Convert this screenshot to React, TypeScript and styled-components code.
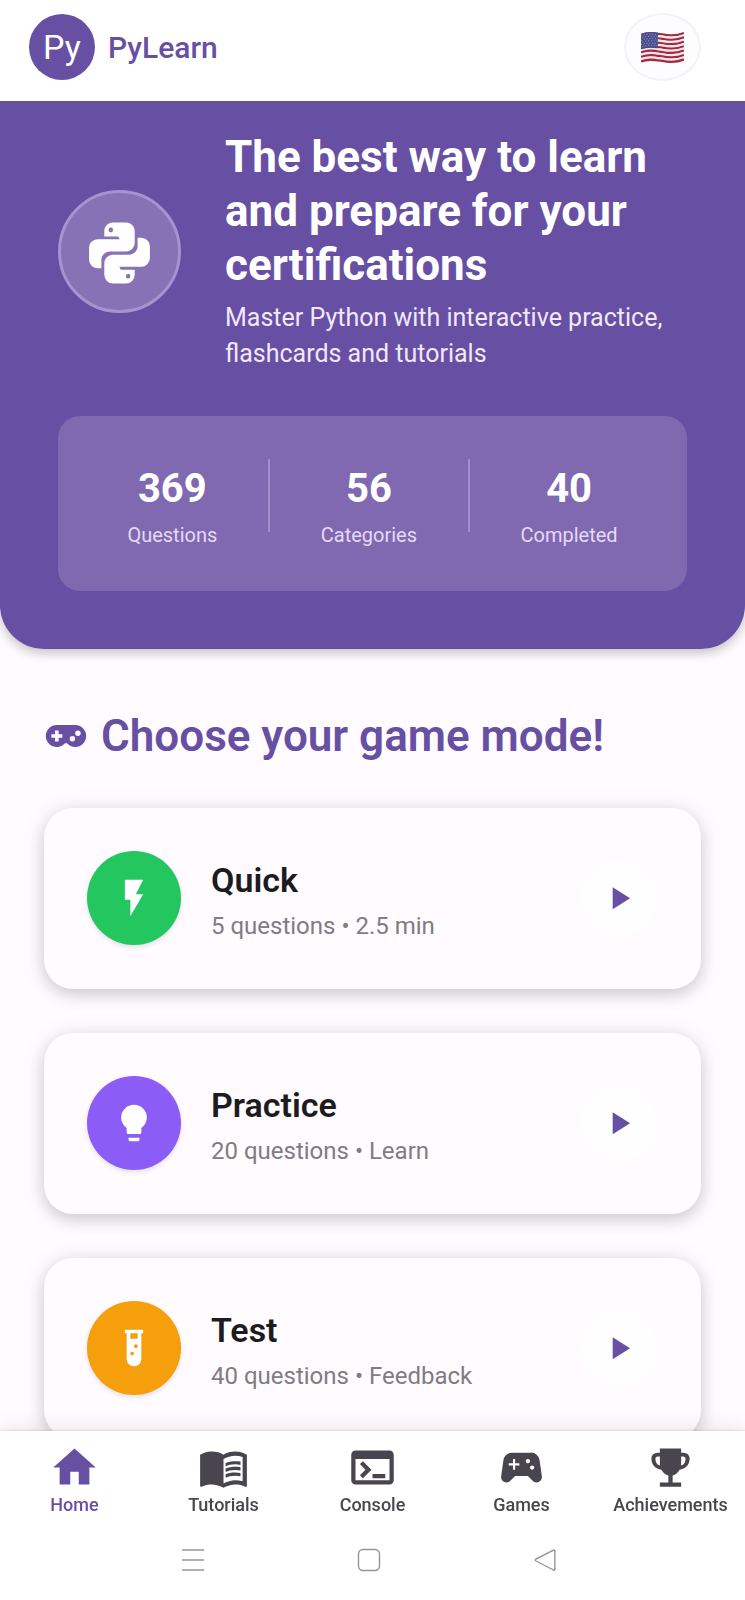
import React from "react";
import styled, { createGlobalStyle } from "styled-components";
import { MdSportsEsports, MdTerminal } from "react-icons/md";

const color = {
  primary: "#674fa3",
  surface: "#fffbff",
  text: "#1c1b1f",
  muted: "#7f7c82",
  nav: "#49454f",
};

const GlobalStyle = createGlobalStyle`
  *, *::before, *::after { box-sizing: border-box; }
  body {
    margin: 0;
    background: #fff;
    color: ${color.text};
    font-family: Roboto, "Liberation Sans", sans-serif;
  }
  h1, h2, h3, p, dl, dt, dd, ul { margin: 0; padding: 0; }
  ul { list-style: none; }
  button { font: inherit; border: 0; padding: 0; cursor: pointer; }
`;

const Screen = styled.div`
  display: flex;
  flex-direction: column;
  height: 100vh;
  overflow: hidden;
`;

const TopBar = styled.header`
  display: flex;
  flex: none;
  align-items: center;
  justify-content: space-between;
  padding: 13px 44px 20px 29px;
  background: #fff;
`;

const Brand = styled.a`
  display: flex;
  align-items: center;
  gap: 13px;
  color: ${color.primary};
  font-size: 30px;
  font-weight: 500;
  text-decoration: none;
`;

const BrandMark = styled.span`
  display: grid;
  place-items: center;
  width: 66px;
  height: 66px;
  border-radius: 50%;
  background: ${color.primary};
  color: #fff;
  font-size: 34px;
  font-weight: 400;
`;

const LanguageButton = styled.button`
  display: grid;
  place-items: center;
  width: 77px;
  height: 68px;
  border: 2px solid #f3f2f7;
  border-radius: 50%;
  background: #fdfdff;
`;

const Content = styled.main`
  flex: 1;
  min-height: 0;
  overflow-y: auto;
  scrollbar-width: none;
  background: ${color.surface};
`;

const Hero = styled.section`
  padding: 29px 58px 58px;
  border-radius: 0 0 44px 44px;
  background: ${color.primary};
  color: #fff;
  box-shadow: 0 4px 12px rgba(0, 0, 0, 0.24);
`;

const HeroIntro = styled.div`
  display: flex;
  align-items: center;
  gap: 44px;
  margin-bottom: 44px;
`;

const HeroBadge = styled.div`
  display: grid;
  flex: none;
  place-items: center;
  width: 123px;
  height: 123px;
  border: 3px solid #a793cf;
  border-radius: 50%;
  background: #8672b5;
`;

const HeroTitle = styled.h1`
  margin-bottom: 8px;
  font-size: 44px;
  font-weight: 700;
  line-height: 54px;
`;

const HeroText = styled.p`
  color: #f1e9fb;
  font-size: 25px;
  line-height: 36px;
`;

const Stats = styled.dl`
  display: flex;
  justify-content: space-around;
  padding: 43px 44px 44px;
  border-radius: 22px;
  background: #8069b1;
`;

const Stat = styled.div`
  display: flex;
  flex-direction: column-reverse;
  gap: 4px;
  text-align: center;
`;

const StatValue = styled.dd`
  font-size: 40px;
  font-weight: 700;
  line-height: 60px;
`;

const StatLabel = styled.dt`
  color: #e4daf4;
  font-size: 20px;
  line-height: 24px;
`;

const StatDivider = styled.div`
  width: 2px;
  height: 73px;
  background: #a18fc9;
`;

const Modes = styled.section`
  padding: 58px 44px 44px;
`;

const ModesTitle = styled.h2`
  display: flex;
  align-items: center;
  gap: 13px;
  margin-bottom: 43px;
  color: ${color.primary};
  font-size: 44px;
  font-weight: 600;
  line-height: 58px;
`;

const ModeList = styled.ul`
  display: flex;
  flex-direction: column;
  gap: 44px;
`;

const ModeCard = styled.li`
  display: flex;
  align-items: center;
  gap: 30px;
  padding: 43px 44px 44px 43px;
  border-radius: 29px;
  background: ${color.surface};
  box-shadow: 0 6px 16px rgba(0, 0, 0, 0.13), 0 2px 24px rgba(0, 0, 0, 0.1);
`;

const ModeIcon = styled.div<{ $color: string }>`
  display: grid;
  flex: none;
  place-items: center;
  width: 94px;
  height: 94px;
  border-radius: 50%;
  background: ${(p) => p.$color};
  color: #fff;
  box-shadow: 0 2px 5px rgba(0, 0, 0, 0.12);
`;

const ModeBody = styled.div`
  flex: 1;
  min-width: 0;
`;

const ModeName = styled.h3`
  margin-bottom: 6px;
  font-size: 34px;
  font-weight: 600;
  line-height: 50px;
`;

const ModeDetail = styled.p`
  color: ${color.muted};
  font-size: 24px;
  line-height: 30px;
`;

const PlayButton = styled.button`
  display: grid;
  flex: none;
  place-items: center;
  width: 76px;
  height: 76px;
  border-radius: 50%;
  background: #fffeff;
  color: ${color.primary};
`;

const TabBar = styled.nav`
  position: relative;
  display: grid;
  flex: none;
  grid-template-columns: repeat(5, minmax(0, 1fr));
  padding: 11px 0 3px;
  background: #fff;
  box-shadow: 0 -1px 2px rgba(0, 0, 0, 0.1), 0 -4px 20px rgba(0, 0, 0, 0.08);
`;

const Tab = styled.a<{ $active?: boolean }>`
  display: flex;
  flex-direction: column;
  align-items: center;
  color: ${(p) => (p.$active ? color.primary : color.nav)};
  font-size: 18px;
  font-weight: 500;
  line-height: 24px;
  text-decoration: none;
`;

const SystemBar = styled.footer`
  position: relative;
  display: flex;
  flex: none;
  height: 80px;
  padding: 0 112px 0 105px;
  background: #fff;
`;

const SystemButton = styled.button`
  display: grid;
  flex: 1;
  place-items: center;
  background: none;
`;

const Icon = ({ d, size }: { d: string; size: number }) => (
  <svg width={size} height={size} viewBox="0 0 24 24" fill="currentColor" fillRule="evenodd" aria-hidden="true">
    <path d={d} />
  </svg>
);

const paths = {
  python:
    "M19.14,7.5A2.86,2.86 0 0,1 22,10.36V14.14A2.86,2.86 0 0,1 19.14,17H12C12,17.39 12.32,17.96 12.71,17.96H17V19.64A2.86,2.86 0 0,1 14.14,22.5H9.86A2.86,2.86 0 0,1 7,19.64V15.89C7,14.31 8.28,13.04 9.86,13.04H15.11C16.69,13.04 17.96,11.76 17.96,10.18V7.5H19.14M14.86,19.29C14.46,19.29 14.14,19.59 14.14,20.18C14.14,20.77 14.46,20.89 14.86,20.89A0.71,0.71 0 0,0 15.57,20.18C15.57,19.59 15.25,19.29 14.86,19.29M4.86,17.5C3.28,17.5 2,16.22 2,14.64V10.86C2,9.28 3.28,8 4.86,8H12C12,7.61 11.68,7.04 11.29,7.04H7V5.36C7,3.78 8.28,2.5 9.86,2.5H14.14C15.72,2.5 17,3.78 17,5.36V9.11C17,10.69 15.72,11.96 14.14,11.96H8.89C7.31,11.96 6.04,13.24 6.04,14.82V17.5H4.86M9.14,5.71C9.54,5.71 9.86,5.41 9.86,4.82C9.86,4.23 9.54,4.11 9.14,4.11A0.71,0.71 0 0,0 8.43,4.82C8.43,5.41 8.75,5.71 9.14,5.71Z",
  gamepad:
    "M7,6H17A6,6 0 0,1 23,12A6,6 0 0,1 17,18C15.22,18 13.63,17.23 12.53,16H11.47C10.37,17.23 8.78,18 7,18A6,6 0 0,1 1,12A6,6 0 0,1 7,6M6,9V11H4V13H6V15H8V13H10V11H8V9H6M15.5,12A1.5,1.5 0 0,0 14,13.5A1.5,1.5 0 0,0 15.5,15A1.5,1.5 0 0,0 17,13.5A1.5,1.5 0 0,0 15.5,12M18.5,9A1.5,1.5 0 0,0 17,10.5A1.5,1.5 0 0,0 18.5,12A1.5,1.5 0 0,0 20,10.5A1.5,1.5 0 0,0 18.5,9Z",
  flash: "M7,2V13H10V22L17,10H13L17,2H7Z",
  bulb: "M12,2A7,7 0 0,0 5,9C5,11.38 6.19,13.47 8,14.74V17A1,1 0 0,0 9,18H15A1,1 0 0,0 16,17V14.74C17.81,13.47 19,11.38 19,9A7,7 0 0,0 12,2M9,21A1,1 0 0,0 10,22H14A1,1 0 0,0 15,21V20H9V21Z",
  tube: "M7,2V4H8V18A4,4 0 0,0 12,22A4,4 0 0,0 16,18V4H17V2H7M11,16C10.4,16 10,15.6 10,15C10,14.4 10.4,14 11,14C11.6,14 12,14.4 12,15C12,15.6 11.6,16 11,16M13,12C12.4,12 12,11.6 12,11C12,10.4 12.4,10 13,10C13.6,10 14,10.4 14,11C14,11.6 13.6,12 13,12M14,7H10V4H14V7Z",
  play: "M8,5.14V19.14L19,12.14L8,5.14Z",
  home: "M10,20V14H14V20H19V12H22L12,3L2,12H5V20H10Z",
  book: "M12 21.5C10.65 20.65 8.2 20 6.5 20C4.85 20 3.15 20.3 1.75 21.05C1.65 21.1 1.6 21.1 1.5 21.1C1.25 21.1 1 20.85 1 20.6V6C1.6 5.55 2.25 5.25 3 5C4.11 4.65 5.33 4.5 6.5 4.5C8.45 4.5 10.55 4.9 12 6C13.45 4.9 15.55 4.5 17.5 4.5C18.67 4.5 19.89 4.65 21 5C21.75 5.25 22.4 5.55 23 6V20.6C23 20.85 22.75 21.1 22.5 21.1C22.4 21.1 22.35 21.1 22.25 21.05C20.85 20.3 19.15 20 17.5 20C15.8 20 13.35 20.65 12 21.5M12 8V19.5C13.35 18.65 15.8 18 17.5 18C18.7 18 19.9 18.15 21 18.5V7C19.9 6.65 18.7 6.5 17.5 6.5C15.8 6.5 13.35 7.15 12 8M13 11.5C14.11 10.82 15.6 10.5 17.5 10.5C18.41 10.5 19.26 10.59 20 10.78V9.23C19.13 9.08 18.29 9 17.5 9C15.73 9 14.23 9.28 13 9.84V11.5M17.5 11.67C15.79 11.67 14.29 11.93 13 12.46V14.15C14.11 13.5 15.6 13.16 17.5 13.16C18.54 13.16 19.38 13.24 20 13.4V11.9C19.13 11.74 18.29 11.67 17.5 11.67M20 14.57C19.13 14.41 18.29 14.33 17.5 14.33C15.67 14.33 14.17 14.6 13 15.13V16.82C14.16 16.16 15.66 15.84 17.5 15.84C18.38 15.84 19.22 15.92 20 16.07V14.57Z",
  trophy:
    "M7 3H17V5H18.2A2.8 2.8 0 0 1 21 7.8C21 10.8 19 12.8 16.3 13C15.5 14.4 14.4 15.4 13 15.8V19H17V21H7V19H11V15.8C9.6 15.4 8.5 14.4 7.7 13C5 12.8 3 10.8 3 7.8A2.8 2.8 0 0 1 5.8 5H7V3ZM7 6.8H6.2C5.3 6.8 4.9 7.2 4.9 8C4.9 9.6 5.7 10.7 7 11.1V6.8ZM17 6.8V11.1C18.3 10.7 19.1 9.6 19.1 8C19.1 7.2 18.7 6.8 17.8 6.8H17Z",
};

// One waving stripe of the flag, starting at height y.
const wave = (y: number) => `M0 ${y}C14 ${y - 6} 26 ${y + 5} 43 ${y - 2}`;

const UsFlag = () => (
  <svg width="43" height="34" viewBox="0 0 43 34" fill="none" aria-hidden="true">
    <defs>
      <clipPath id="canton">
        <rect width="17" height="34" />
      </clipPath>
    </defs>
    {Array.from({ length: 13 }, (_, i) => (
      <path key={i} d={wave(5 + i * 2.2)} stroke={i % 2 ? "#f4e6e8" : "#a02c42"} strokeWidth="2.3" />
    ))}
    <g clipPath="url(#canton)">
      {Array.from({ length: 7 }, (_, i) => (
        <path key={i} d={wave(5 + i * 2.2)} stroke="#4a4d8f" strokeWidth="2.5" />
      ))}
      {Array.from({ length: 6 }, (_, i) => (
        <path
          key={i}
          d={wave(6 + i * 2.2)}
          stroke="#a9abd2"
          strokeWidth="0.9"
          strokeDasharray="0.9 2"
          strokeDashoffset={i % 2 ? 1.4 : 0}
        />
      ))}
    </g>
  </svg>
);

const stats = [
  { value: "369", label: "Questions" },
  { value: "56", label: "Categories" },
  { value: "40", label: "Completed" },
];

const modes = [
  { name: "Quick", detail: "5 questions • 2.5 min", color: "#24c660", icon: paths.flash },
  { name: "Practice", detail: "20 questions • Learn", color: "#8b5cf6", icon: paths.bulb },
  { name: "Test", detail: "40 questions • Feedback", color: "#f49f0b", icon: paths.tube },
];

const tabs = [
  { label: "Home", icon: <Icon d={paths.home} size={51} />, active: true },
  { label: "Tutorials", icon: <Icon d={paths.book} size={51} /> },
  { label: "Console", icon: <MdTerminal size={51} /> },
  { label: "Games", icon: <MdSportsEsports size={51} /> },
  { label: "Achievements", icon: <Icon d={paths.trophy} size={51} /> },
];

export default function App() {
  return (
    <Screen>
      <GlobalStyle />
      <TopBar>
        <Brand href="#home">
          <BrandMark>Py</BrandMark>
          PyLearn
        </Brand>
        <LanguageButton type="button" aria-label="Language: English">
          <UsFlag />
        </LanguageButton>
      </TopBar>

      <Content>
        <Hero>
          <HeroIntro>
            <HeroBadge>
              <Icon d={paths.python} size={73} />
            </HeroBadge>
            <div>
              <HeroTitle>The best way to learn and prepare for your certifications</HeroTitle>
              <HeroText>Master Python with interactive practice, flashcards and tutorials</HeroText>
            </div>
          </HeroIntro>
          <Stats>
            {stats.map((s, i) => (
              <React.Fragment key={s.label}>
                {i > 0 && <StatDivider />}
                <Stat>
                  <StatLabel>{s.label}</StatLabel>
                  <StatValue>{s.value}</StatValue>
                </Stat>
              </React.Fragment>
            ))}
          </Stats>
        </Hero>

        <Modes>
          <ModesTitle>
            <Icon d={paths.gamepad} size={44} />
            Choose your game mode!
          </ModesTitle>
          <ModeList>
            {modes.map((m) => (
              <ModeCard key={m.name}>
                <ModeIcon $color={m.color}>
                  <Icon d={m.icon} size={44} />
                </ModeIcon>
                <ModeBody>
                  <ModeName>{m.name}</ModeName>
                  <ModeDetail>{m.detail}</ModeDetail>
                </ModeBody>
                <PlayButton type="button" aria-label={`Play ${m.name}`}>
                  <Icon d={paths.play} size={38} />
                </PlayButton>
              </ModeCard>
            ))}
          </ModeList>
        </Modes>
      </Content>

      <TabBar aria-label="Main">
        {tabs.map((t) => (
          <Tab key={t.label} href={`#${t.label.toLowerCase()}`} $active={t.active}>
            {t.icon}
            {t.label}
          </Tab>
        ))}
      </TabBar>

      <SystemBar>
        <SystemButton type="button" aria-label="Recent apps">
          <svg width="24" height="24" viewBox="0 0 24 24" fill="none" stroke="#959595" strokeWidth="1.6">
            <path d="M1 2H23M1 12H23M1 22H23" />
          </svg>
        </SystemButton>
        <SystemButton type="button" aria-label="Home screen">
          <svg width="24" height="24" viewBox="0 0 24 24" fill="none" stroke="#959595" strokeWidth="1.4">
            <rect x="1.5" y="1.5" width="21" height="21" rx="4.5" />
          </svg>
        </SystemButton>
        <SystemButton type="button" aria-label="Back">
          <svg width="24" height="24" viewBox="0 0 24 24" fill="none" stroke="#959595" strokeWidth="1.4" strokeLinejoin="round">
            <path d="M21.8 3V21.2Q21.8 22.6 20.5 22L3 13Q1.4 12 3 11L20.5 2.2Q21.8 1.6 21.8 3Z" />
          </svg>
        </SystemButton>
      </SystemBar>
    </Screen>
  );
}
